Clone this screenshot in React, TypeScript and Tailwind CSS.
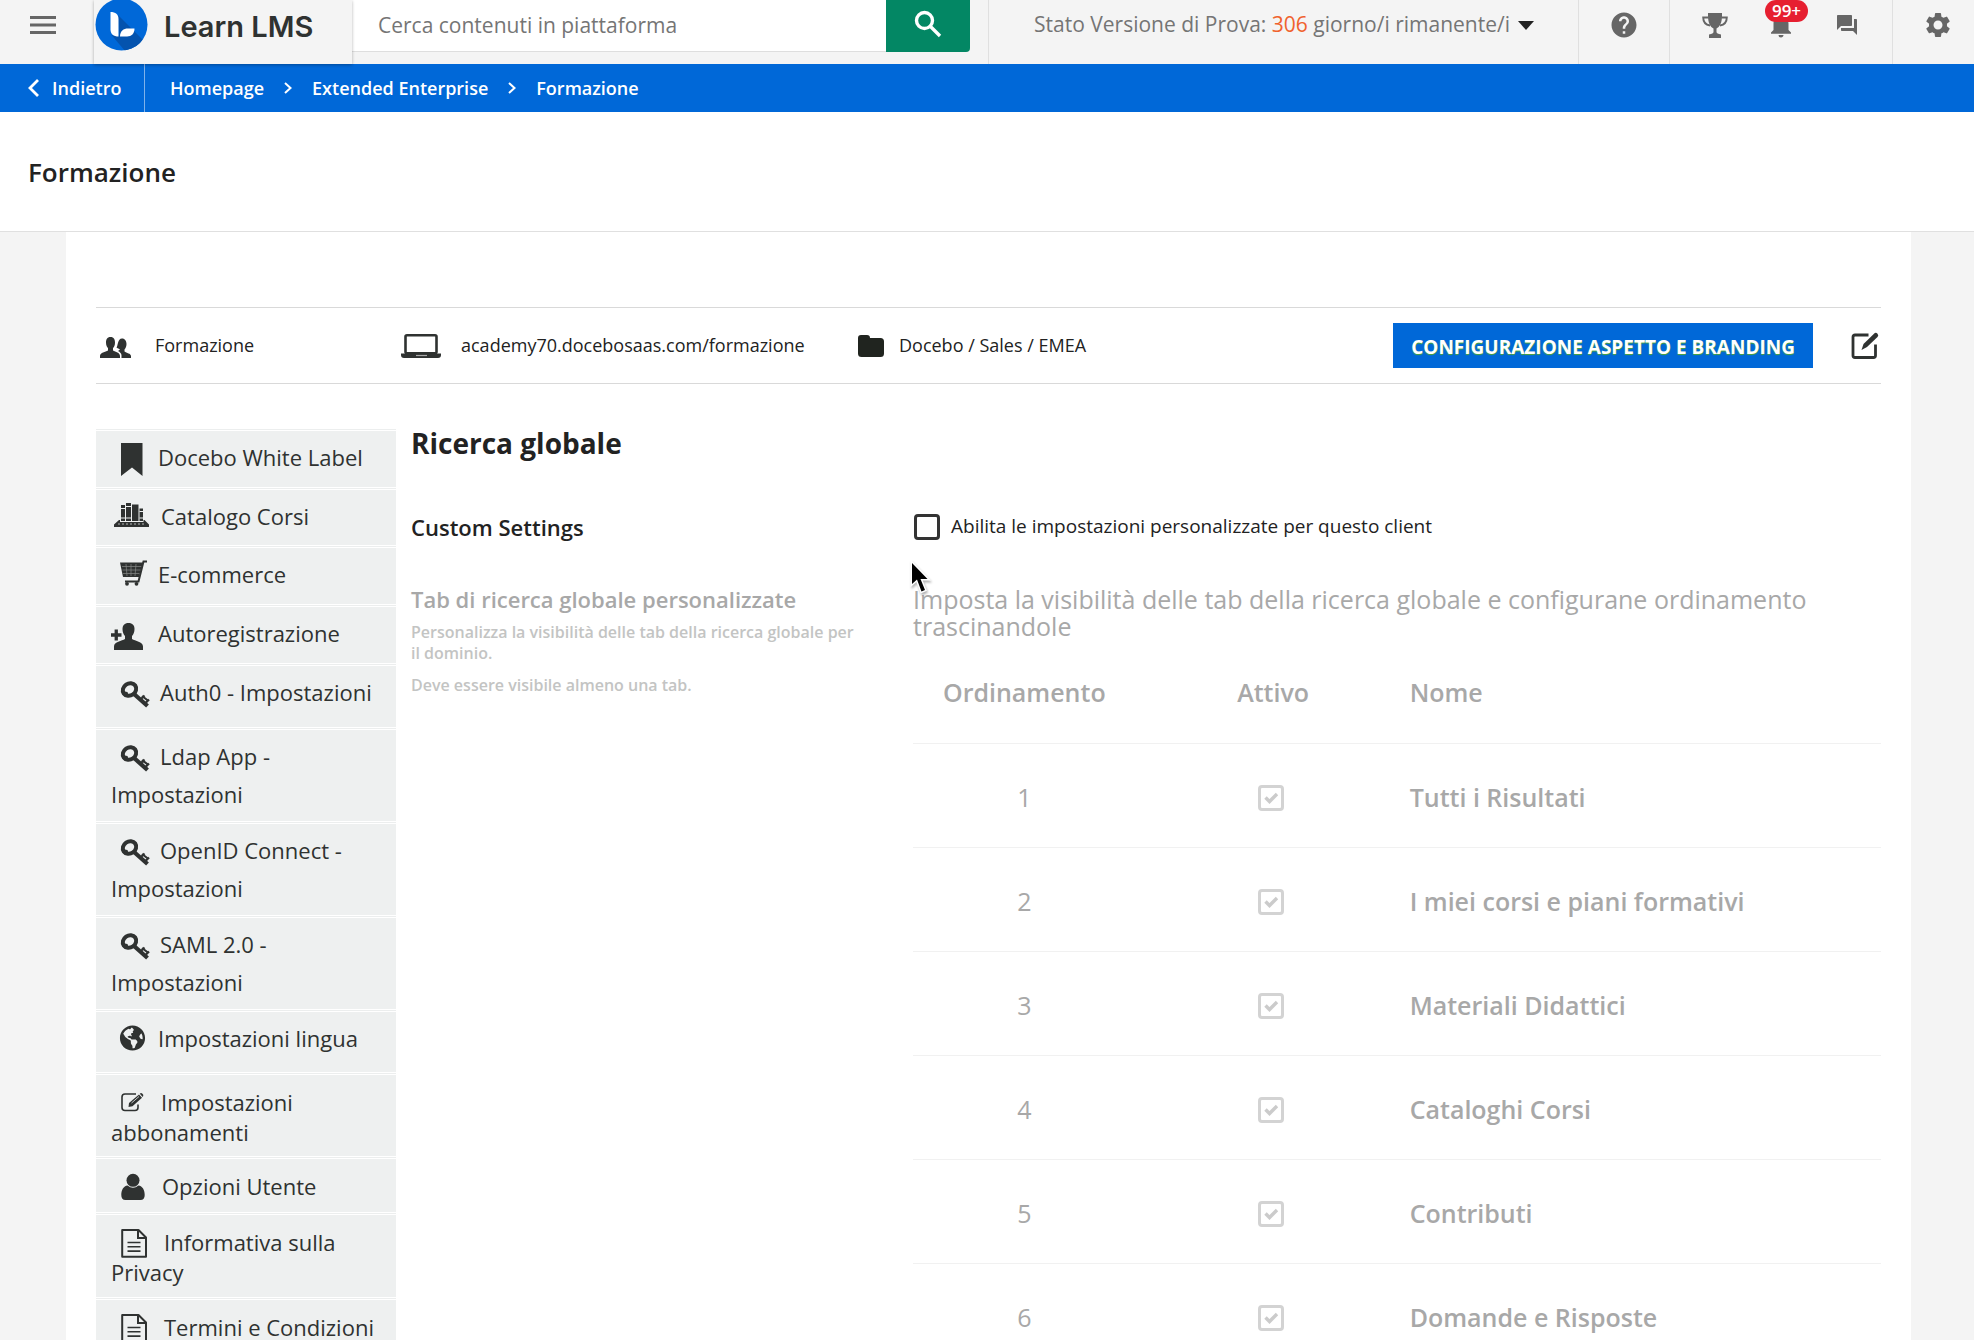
import type { ReactNode } from "react";
import { MdForum, MdHelp, MdNotifications, MdSettings } from "react-icons/md";
import { FaGlobeAmericas } from "react-icons/fa";

const INK = "#2f3231";

function Glyph({ w, children }: { w: number; children: ReactNode }) {
  return (
    <svg
      width={w}
      height="34"
      viewBox={`0 0 ${w} 34`}
      fill={INK}
      className="-my-2 inline-block overflow-visible align-middle"
      aria-hidden="true"
    >
      {children}
    </svg>
  );
}

const bookmark = (
  <Glyph w={47}>
    <path d="M10 0H31.500V33L21 24.500L10 33Z" />
  </Glyph>
);

const books = (
  <Glyph w={50}>
    <path d="M3 25V22.500L8 18H9V20H32.500V18H33.500L38 22.500V25Z" />
    <path d="M10 3h4v16h-4zM15 1h5v18h-5zM21 2.500h6.500v16.500H21zM28.500 6.500h3.500v12.500h-3.500z" />
    <path d="M10 6.500h4M15 4.500h5M28.500 9.500h3.500M10 16h4M15 16h5M28.500 16h3.500" stroke="#eef0f0" strokeWidth="1" />
    <path d="M7 22h27" stroke="#eef0f0" strokeWidth="0.7" strokeDasharray="2 2" />
  </Glyph>
);

const cart = (
  <Glyph w={47}>
    <path d="M9 2.500H32L28 17H12Z" />
    <path d="M11 6.500h20M11.500 10h18.500M12 13.500h17M15 4l1 12M20 4v12M25 4l-1 12" stroke="#858887" strokeWidth="0.7" />
    <path d="M36 1.500H32.500L27.500 21.500H14" fill="none" stroke={INK} strokeWidth="2" />
    <circle cx="16" cy="23.800" r="1.900" />
    <circle cx="25.500" cy="23.800" r="1.900" />
  </Glyph>
);

const personPlus = (
  <Glyph w={47}>
    <path d="M0 14.300H3.600V10.500H6.900V14.300H10.500V17.700H6.900V21.500H3.600V17.700H0Z" />
    <path d="M17.500 4c4 0 6 2.500 6 6 0 3-1 5.500-2.500 7v3c3 2 11 2.500 11 7.500V31H3V27.500c0-5 8-5.500 11-7.500v-3c-1.500-1.500-2.500-4-2.500-7 0-3.500 2-6 6-6Z" />
  </Glyph>
);

const key = (
  <Glyph w={49}>
    <ellipse cx="18.500" cy="11.500" rx="7" ry="6" transform="rotate(-35 18.500 11.500)" fill="none" stroke={INK} strokeWidth="4" />
    <path d="M10.500 13l6 1 1.500 5-5-1z" />
    <path d="M22.500 15.500L36.500 28" fill="none" stroke={INK} strokeWidth="4.200" />
    <path d="M29 22l4.500-4.500M33.500 26l4.500-4.500M31 18l6.500 5" fill="none" stroke={INK} strokeWidth="2.200" />
  </Glyph>
);

const globe = (
  <Glyph w={47}>
    <FaGlobeAmericas x="8.500" y="1" size={26} />
  </Glyph>
);

const pencilSquare = (
  <Glyph w={50}>
    <path d="M25 6H14Q11 6 11 9V19.500Q11 22.500 14 22.500H24Q27 22.500 27 19.500V16.500" fill="none" stroke={INK} strokeWidth="1.600" />
    <path d="M18 15L28 6.500L31 9.800L21.500 18.300L17.500 19Z" />
    <path d="M28.800 5.800Q30 4.500 31.200 5.600L32 6.600Q32.800 7.800 31.700 9Z" />
    <path d="M20.500 15L28 8.500" stroke="#eef0f0" strokeWidth="0.800" />
  </Glyph>
);

const user = (
  <Glyph w={51}>
    <circle cx="22" cy="8.300" r="6.500" />
    <path d="M16.500 13.500Q22 18 27.500 13.500C31.500 14 33.700 18 33.700 23Q33.700 28 29.500 28H14.500Q10.300 28 10.300 23C10.300 18 12.500 14 16.500 13.500Z" />
  </Glyph>
);

const doc = (
  <Glyph w={53}>
    <path d="M11.200 2H27.500L35 9.500V28.800H11.200Z" fill="none" stroke={INK} strokeWidth="2" strokeLinejoin="round" />
    <path d="M27 2V10H35" fill="none" stroke={INK} strokeWidth="2" />
    <path d="M16.500 14.500H29.500M16.500 18.800H29.500M16.500 23.100H29.500" stroke={INK} strokeWidth="1.600" />
  </Glyph>
);

const menu: { label: string; icon: ReactNode; pad: string }[] = [
  { label: "Docebo White Label", icon: bookmark, pad: "pt-[11px] pb-[15px] leading-[30px]" },
  { label: "Catalogo Corsi", icon: books, pad: "pt-[11px] pb-3.5 leading-[30px]" },
  { label: "E-commerce", icon: cart, pad: "pt-[11px] pb-[15px] leading-[30px]" },
  { label: "Autoregistrazione", icon: personPlus, pad: "pt-[11px] pb-[15px] leading-[30px]" },
  { label: "Auth0 - Impostazioni", icon: key, pad: "pt-[7px] pb-4 leading-[38px]" },
  { label: "Ldap App - Impostazioni", icon: key, pad: "pt-[7px] pb-2 leading-[38px]" },
  { label: "OpenID Connect - Impostazioni", icon: key, pad: "pt-[7px] pb-2 leading-[38px]" },
  { label: "SAML 2.0 - Impostazioni", icon: key, pad: "pt-[7px] pb-2 leading-[38px]" },
  { label: "Impostazioni lingua", icon: globe, pad: "pt-[11px] pb-[19px] leading-[30px]" },
  { label: "Impostazioni abbonamenti", icon: pencilSquare, pad: "pt-3 pb-[9px] leading-[30px]" },
  { label: "Opzioni Utente", icon: user, pad: "pt-3 pb-[11px] leading-[30px]" },
  { label: "Informativa sulla Privacy", icon: doc, pad: "pt-3 pb-2.5 leading-[30px]" },
  { label: "Termini e Condizioni", icon: doc, pad: "pt-3 pb-3.5 leading-[30px]" },
];

const tabs = [
  "Tutti i Risultati",
  "I miei corsi e piani formativi",
  "Materiali Didattici",
  "Cataloghi Corsi",
  "Contributi",
  "Domande e Risposte",
];

function Logo() {
  return (
    <svg width="53" height="53" viewBox="0 0 53 53" className="shrink-0" aria-hidden="true">
      <defs>
        <clipPath id="logo-disc">
          <circle cx="26.500" cy="26.500" r="26" />
        </clipPath>
      </defs>
      <circle cx="26.500" cy="26.500" r="26" fill="#0068d8" />
      <path d="M23 17L60 54L36 60L16.500 37L24 37Z" fill="#0453ae" clipPath="url(#logo-disc)" />
      <path d="M15.500 14C20.500 14 23.500 16.500 23.500 21V38.500C18.500 38.500 15.500 36 15.500 31.500Z" fill="#fff" />
      <path d="M25 38.500C25 33 28.500 30.500 33 30.500H39.500C39.500 35.500 36.500 38.500 32 38.500Z" fill="#fff" />
    </svg>
  );
}

function Header() {
  return (
    <header className="flex h-16 bg-[#f4f4f4] text-[#666]">
      <button aria-label="Menu" className="flex w-[94px] shrink-0 items-center pb-3.5 pl-[30px]">
        <svg width="26" height="20" viewBox="0 0 26 20" stroke="#666" strokeWidth="2.800">
          <path d="M0 2.500H26M0 10H26M0 17.500H26" />
        </svg>
      </button>
      <a
        href="#"
        className="relative z-10 flex w-[258px] shrink-0 items-center gap-4 bg-[#f4f4f4] pb-[15px] pl-px text-[#2f3231] shadow-[0_1px_3px_rgba(0,0,0,0.3)]"
      >
        <Logo />
        <span className="pt-1 font-['Inter',sans-serif] text-[29px] leading-8 font-semibold">Learn LMS</span>
      </a>
      <form className="flex h-[52px] min-w-0 flex-1 pr-[18px]" onSubmit={(e) => e.preventDefault()}>
        <input
          type="search"
          aria-label="Cerca contenuti in piattaforma"
          placeholder="Cerca contenuti in piattaforma"
          className="min-w-0 flex-1 border-b border-[#dedede] bg-white px-[26px] text-[21px] text-[#666] outline-none placeholder:text-[#757575]"
        />
        <button aria-label="Cerca" className="flex w-[84px] items-center justify-center rounded-br bg-[#038764] pb-1">
          <svg width="28" height="28" viewBox="0 0 28 28" fill="none" stroke="#fff" strokeWidth="3.400">
            <circle cx="10.500" cy="10.500" r="8" />
            <path d="M16.500 16.500L26 26" />
          </svg>
        </button>
      </form>
      <div className="flex w-[590px] shrink-0 items-center border-l border-[#e0e0e0] pb-3.5 pl-[45px]">
        <button className="flex items-center gap-2 text-[21px] whitespace-nowrap text-[#757575]">
          <span>
            Stato Versione di Prova: <span className="text-[#f0622d]">306</span> giorno/i rimanente/i
          </span>
          <svg width="16" height="9" viewBox="0 0 16 9" fill="#222" aria-hidden="true">
            <path d="M0 0H16L8 9Z" />
          </svg>
        </button>
      </div>
      <div className="flex w-[91px] shrink-0 items-center justify-center border-l border-[#e0e0e0] pb-3.5">
        <button aria-label="Aiuto">
          <MdHelp size={30} />
        </button>
      </div>
      <div className="flex w-[223px] shrink-0 items-center border-l border-[#e0e0e0] pb-3.5 pl-8">
        <button aria-label="Classifica">
          <svg width="26" height="25" viewBox="0 0 26 25" fill="#666">
            <path d="M6 0H20V3C20 10 17.500 14 14.500 15.500V19Q14.500 20.500 19 21.500V25H7V21.500Q11.500 20.500 11.500 19V15.500C8.500 14 6 10 6 3Z" />
            <path d="M6.500 4.500H1.200C1.200 9.500 4 11.800 8 12.500M19.500 4.500H24.800C24.800 9.500 22 11.800 18 12.500" fill="none" stroke="#666" strokeWidth="1.900" />
          </svg>
        </button>
        <button aria-label="Notifiche, 99+" className="relative ml-[38px]">
          <MdNotifications size={30} />
          <span className="absolute -top-2.5 -left-px flex h-[22px] w-[43px] items-center justify-center rounded-full bg-[#e61f30] text-[17px] leading-5 font-semibold text-white">
            99+
          </span>
        </button>
        <button aria-label="Messaggi" className="ml-[39px]">
          <MdForum size={24} />
        </button>
      </div>
      <div className="flex w-[82px] shrink-0 items-center border-l border-[#e0e0e0] pb-3.5 pl-[30px]">
        <button aria-label="Impostazioni">
          <MdSettings size={30} />
        </button>
      </div>
    </header>
  );
}

function Separator() {
  return (
    <svg width="8" height="12" viewBox="0 0 8 12" fill="none" stroke="#fff" strokeWidth="2" aria-hidden="true">
      <path d="M1 1L6.500 6L1 11" />
    </svg>
  );
}

function Breadcrumb() {
  return (
    <nav aria-label="Percorso" className="flex h-12 items-center bg-[#0068d8] text-lg font-semibold text-white">
      <a href="#" className="flex h-full w-[145px] items-center gap-3 border-r border-[#7fb2ea] pl-7">
        <svg width="12" height="18" viewBox="0 0 12 18" fill="none" stroke="#fff" strokeWidth="2.800" aria-hidden="true">
          <path d="M10 1L2 9L10 17" />
        </svg>
        Indietro
      </a>
      <div className="flex items-center gap-5 pl-[25px]">
        <a href="#">Homepage</a>
        <Separator />
        <a href="#">Extended Enterprise</a>
        <Separator />
        <a href="#">Formazione</a>
      </div>
    </nav>
  );
}

function InfoBar() {
  return (
    <div className="grid h-[77px] grid-cols-[305px_457px_1fr_auto] items-center border-y border-[#d9d9d9] text-lg leading-6 text-[#222]">
      <div className="flex items-center gap-6 pl-1">
        <svg width="31" height="21" viewBox="0 0 31 21" fill={INK} className="mt-1" aria-hidden="true">
          <path d="M10.500 0C14 0 15 2.500 15 5.500C15 8.500 14 10 13 11V13.500C15.500 15 20 15.500 20 19V21H0V19C0 15.500 5.500 15 8 13.500V11C7 10 6 8.500 6 5.500C6 2.500 7 0 10.500 0Z" />
          <path d="M22 1.500C25 1.500 26.500 4 26.500 7C26.500 9.500 25.500 11.500 24.500 12.500V14.500C26.500 16 31 16.500 31 19V21H21.500V18.500C21.500 16.500 20 15 18 14L20 12.500C18.500 11 16.500 11 16.500 10.500C18 9 17.500 1.500 22 1.500Z" />
        </svg>
        <span className="pb-0.5">Formazione</span>
      </div>
      <div className="flex items-center gap-5">
        <svg width="40" height="24" viewBox="0 0 40 24" aria-hidden="true">
          <rect x="4.500" y="1.300" width="31" height="18" rx="1.500" fill="none" stroke={INK} strokeWidth="2.600" />
          <path d="M0 19.500H40V21Q40 24 37 24H3Q0 24 0 21Z" fill={INK} />
          <path d="M15 21.500H26" stroke="#aaa" strokeWidth="1.200" />
        </svg>
        <span className="pb-0.5">academy70.docebosaas.com/formazione</span>
      </div>
      <div className="flex items-center gap-[15px]">
        <svg width="26" height="22" viewBox="0 0 26 22" fill="#20241f" aria-hidden="true">
          <path d="M0 3Q0 0 3 0H9Q12 0 12 3H22.500Q26 3 26 6.500V18.500Q26 22 22.500 22H3.500Q0 22 0 18.500Z" />
        </svg>
        <span className="pb-0.5">Docebo / Sales / EMEA</span>
      </div>
      <div className="flex items-center gap-[38px] pr-0.5">
        <button className="h-[45px] bg-[#0068d8] px-[18px] pt-0.5 text-[19px] font-bold text-white [text-shadow:0_1px_1px_#4fa82f]">
          CONFIGURAZIONE ASPETTO E BRANDING
        </button>
        <button aria-label="Modifica">
          <svg width="28" height="28" viewBox="0 0 28 28" fill="none" stroke={INK} aria-hidden="true">
            <path d="M17.500 3H4Q2 3 2 5V23.500Q2 25.500 4 25.500H22.500Q24.500 25.500 24.500 23.500V12.500" strokeWidth="2.800" />
            <path d="M10.500 18L12.500 12L23 1.700Q24.800 0 26.500 1.700Q28 3.500 26.500 5L16 15Z" fill={INK} stroke="none" />
          </svg>
        </button>
      </div>
    </div>
  );
}

function Sidebar() {
  return (
    <nav aria-label="Impostazioni client" className="w-[300px] shrink-0">
      <ul>
        {menu.map((m) => (
          <li key={m.label} className="border-t border-[#eceeee] py-px text-[22px] text-[#2f3231]">
            <a href="#" className={`block bg-[#eef0f0] pr-2 pl-[15px] ${m.pad}`}>
              {m.icon}
              {m.label}
            </a>
          </li>
        ))}
      </ul>
    </nav>
  );
}

function TabsTable() {
  return (
    <table className="w-full table-fixed border-separate border-spacing-0 text-[25px] leading-8 text-[#a8a8a8]">
      <thead>
        <tr className="h-[103px]">
          <th className="w-[23%] border-b border-[#f1f1f1] font-semibold">Ordinamento</th>
          <th className="w-[28%] border-b border-[#f1f1f1] pl-1 font-semibold">Attivo</th>
          <th className="border-b border-[#f1f1f1] pl-[3px] text-left font-semibold">Nome</th>
        </tr>
      </thead>
      <tbody>
        {tabs.map((t, i) => (
          <tr key={t} className="h-[104px]">
            <td className="border-b border-[#f1f1f1] pt-0.5 text-center">{i + 1}</td>
            <td className="border-b border-[#f1f1f1] pt-1">
              <label className="relative mx-auto block size-[26px]">
                <input
                  type="checkbox"
                  checked
                  disabled
                  readOnly
                  aria-label={t}
                  className="block size-[26px] appearance-none rounded border-3 border-[#d3d3d3] bg-white"
                />
                <svg
                  viewBox="0 0 26 26"
                  className="pointer-events-none absolute inset-0"
                  fill="none"
                  stroke="#cbcbcb"
                  strokeWidth="3.400"
                  aria-hidden="true"
                >
                  <path d="M7.500 12.500L11.500 16.500L19 9" />
                </svg>
              </label>
            </td>
            <td className="border-b border-[#f1f1f1] pt-0.5 pl-[3px] font-semibold">{t}</td>
          </tr>
        ))}
      </tbody>
    </table>
  );
}

function Pointer() {
  return (
    <svg
      width="24"
      height="36"
      viewBox="-3 -3 24 36"
      className="pointer-events-none absolute -top-[26px] -left-1 drop-shadow-[1px_2px_1px_rgba(0,0,0,0.3)]"
      aria-hidden="true"
    >
      <path
        d="M0 0V21L5 16.500L9.500 28.500L13 27L8.500 16H15.500Z"
        fill="#000"
        stroke="#fff"
        strokeWidth="3"
        paintOrder="stroke"
      />
    </svg>
  );
}

export default function App() {
  return (
    <div className="h-screen overflow-hidden bg-[#f4f4f4] font-['Open_Sans',sans-serif]">
      <Header />
      <Breadcrumb />
      <div className="flex h-[120px] items-center border-b border-[#e0e0e0] bg-white px-7">
        <h1 className="text-[26px] leading-9 font-semibold text-[#222]">Formazione</h1>
      </div>
      <main className="mr-[63px] ml-[66px] bg-white px-[30px] pt-[75px]">
        <InfoBar />
        <div className="flex gap-[15px] pt-[45px]">
          <Sidebar />
          <section className="min-w-0 flex-1">
            <h2 className="text-[28px] leading-7 font-bold text-[#222]">Ricerca globale</h2>
            <div className="mt-[55px] grid grid-cols-[502px_1fr]">
              <h3 className="text-[22px] leading-[30px] font-semibold text-[#222]">Custom Settings</h3>
              <label className="flex items-center gap-[11px] text-[19px] leading-7 text-[#222]">
                <input type="checkbox" className="ml-px size-[26px] appearance-none rounded-sm border-3 border-[#333] bg-white" />
                <span className="pb-0.5">Abilita le impostazioni personalizzate per questo client</span>
              </label>
            </div>
            <div className="mt-11 grid grid-cols-[502px_1fr]">
              <div>
                <h3 className="text-[22px] leading-[27px] font-semibold text-[#a8a8a8]">
                  Tab di ricerca globale personalizzate
                </h3>
                <div className="mt-[9px] w-[450px] text-base leading-[21px] font-semibold text-[#c3c4c3]">
                  <p>Personalizza la visibilità delle tab della ricerca globale per il dominio.</p>
                  <p className="mt-[11px]">Deve essere visibile almeno una tab.</p>
                </div>
              </div>
              <div className="relative">
                <p className="pb-px text-[25px] leading-[27px] text-[#a8a8a8]">
                  Imposta la visibilità delle tab della ricerca globale e configurane ordinamento trascinandole
                </p>
                <Pointer />
                <TabsTable />
              </div>
            </div>
          </section>
        </div>
      </main>
    </div>
  );
}
